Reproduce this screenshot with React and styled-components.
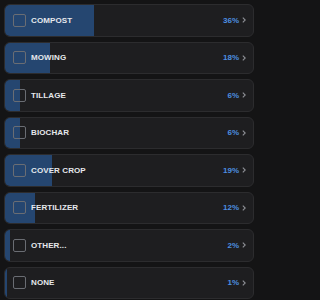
import React from "react";
import styled, { createGlobalStyle } from "styled-components";

const GlobalStyle = createGlobalStyle`
  html, body {
    margin: 0;
    padding: 0;
    background: #141415;
    font-family: "Liberation Sans", Arial, sans-serif;
  }
`;

const options = [
  { id: "compost", label: "COMPOST", pct: 36 },
  { id: "mowing", label: "MOWING", pct: 18 },
  { id: "tillage", label: "TILLAGE", pct: 6 },
  { id: "biochar", label: "BIOCHAR", pct: 6 },
  { id: "cover", label: "COVER CROP", pct: 19 },
  { id: "fertilizer", label: "FERTILIZER", pct: 12 },
  { id: "other", label: "OTHER...", pct: 2 },
  { id: "none", label: "NONE", pct: 1 },
];

const List = styled.div`
  display: flex;
  flex-direction: column;
  gap: 5px;
  padding: 4px 4px 0 4px;
  width: 258px;
  box-sizing: border-box;
`;

const Row = styled.div`
  position: relative;
  height: 32.5px;
  border: 1px solid #2c2c2e;
  border-radius: 6px;
  background: #1e1e20;
  overflow: hidden;
  display: flex;
  align-items: center;
  padding: 0 7px 0 8px;
  box-sizing: border-box;
`;

const Fill = styled.div`
  position: absolute;
  left: 0;
  top: 0;
  bottom: 0;
  background: #254670;
`;

const Box = styled.span`
  position: relative;
  width: 13px;
  height: 13px;
  border: 1px solid #6a6d73;
  border-radius: 2px;
  box-sizing: border-box;
  flex-shrink: 0;
`;

const Label = styled.span`
  position: relative;
  margin-left: 5px;
  flex: 1;
  color: #e6e8ec;
  font-size: 8px;
  font-weight: bold;
  letter-spacing: 0.1px;
`;

const Pct = styled.span`
  position: relative;
  color: #4d8fe0;
  font-size: 8px;
  font-weight: bold;
`;

const Chevron = styled.svg`
  position: relative;
  margin-left: 3px;
  width: 4px;
  height: 6px;
`;

export default function App() {
  return (
    <>
      <GlobalStyle />
      <List>
        {options.map((o) => (
          <Row key={o.id}>
            <Fill style={{ width: `${o.pct}%` }} />
            <Box />
            <Label>{o.label}</Label>
            <Pct>{o.pct}%</Pct>
            <Chevron viewBox="0 0 4 6">
              <path d="M0.8 0.6 L3.2 3 L0.8 5.4" fill="none" stroke="#8e9096" strokeWidth="1.1" />
            </Chevron>
          </Row>
        ))}
      </List>
    </>
  );
}
